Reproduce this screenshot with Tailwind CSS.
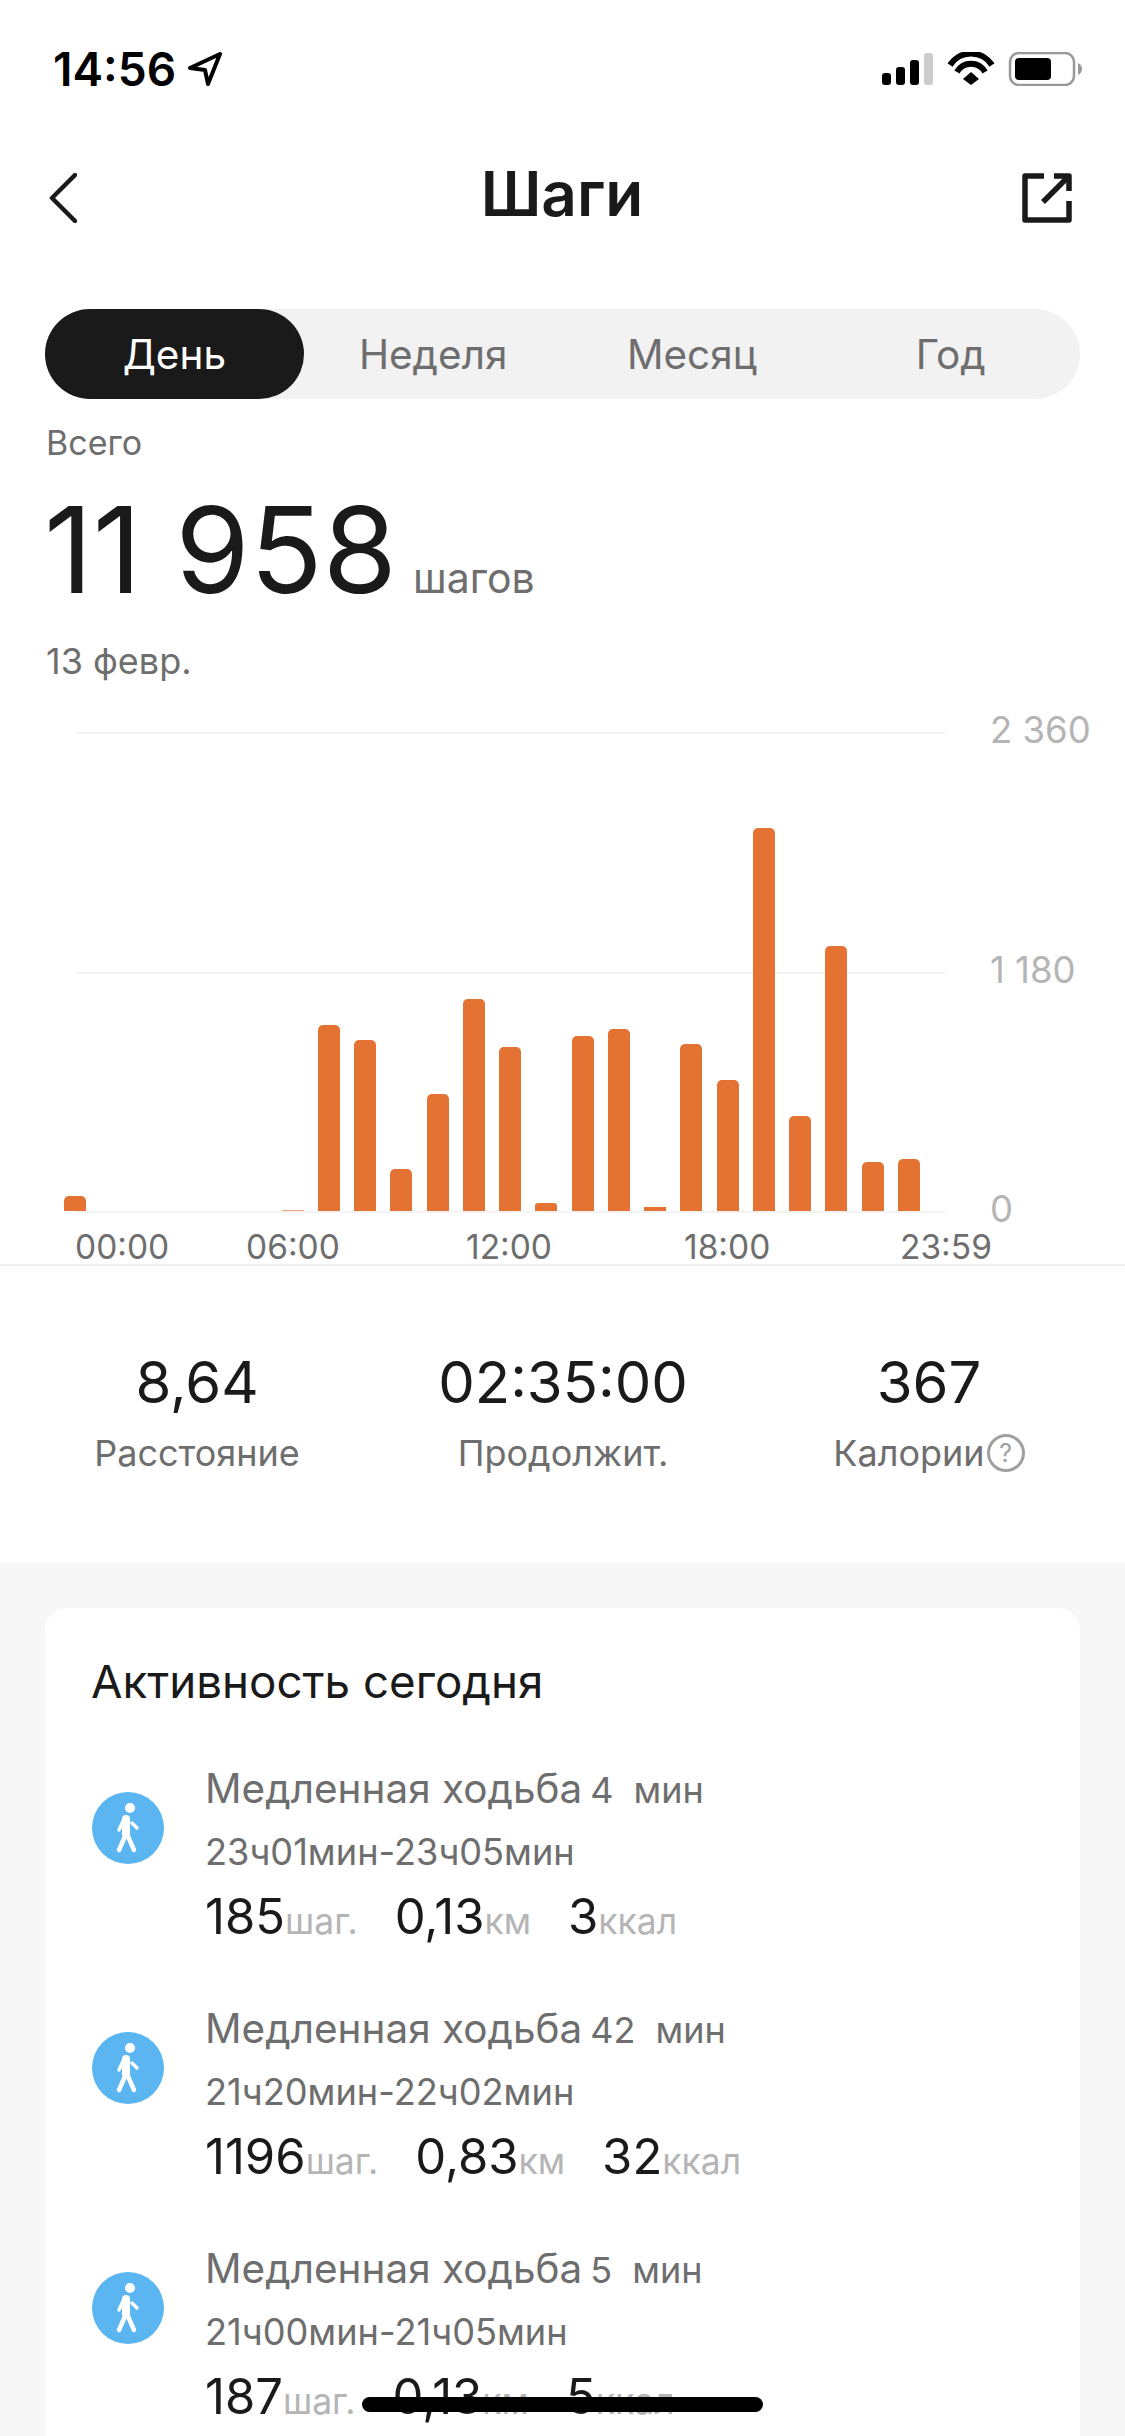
<!DOCTYPE html>
<html lang="ru">

<head>
  <meta charset="UTF-8">
  <meta name="viewport" content="width=device-width, initial-scale=1.0">
  <title>Шаги</title>
  <script src="https://cdn.jsdelivr.net/npm/@tailwindcss/browser@4"></script>
</head>

<body class="bg-white font-['Inter',sans-serif] text-[#1a1a1a]">
  <div class="relative h-[2436px] w-[1125px] overflow-hidden">

    <!-- Status bar -->
    <div class="flex h-[140px] justify-between pl-[53px] pr-[43px] pt-[52px]">
      <div class="flex h-[34px] items-center gap-[12px]">
        <span class="text-[46px] font-semibold leading-[34px] text-black">14:56</span>
        <svg width="34" height="34" viewBox="0 0 34 34" fill="none" stroke="#000" stroke-width="4" stroke-linejoin="round">
          <path d="M32 2 L2 16 L17 18 L20 32 Z" />
        </svg>
      </div>
      <svg width="200" height="34" viewBox="0 0 200 34">
        <rect x="0" y="21" width="9" height="12" rx="3" fill="#000" />
        <rect x="14" y="15" width="9" height="18" rx="3" fill="#000" />
        <rect x="28" y="8" width="9" height="25" rx="3" fill="#000" />
        <rect x="42" y="1" width="9" height="32" rx="3" fill="#ccc" />
        <path d="M68 13 A 25 25 0 0 1 110 13" fill="none" stroke="#000" stroke-width="6" />
        <path d="M75 20 A 16 16 0 0 1 103 20" fill="none" stroke="#000" stroke-width="6" />
        <path d="M81 27 L89 20 Q89 20 97 27 L89 33 Z" fill="#000" />
        <rect x="128" y="1" width="64" height="32" rx="9" fill="none" stroke="#999" stroke-width="2.5" />
        <rect x="133" y="6" width="36" height="22" rx="4" fill="#000" />
        <path d="M196 11 Q200 13 200 17 Q200 21 196 23 Z" fill="#999" />
      </svg>
    </div>

    <!-- Header -->
    <div class="grid h-[116px] grid-cols-[1fr_auto_1fr] items-center pl-[49px] pr-[53px]">
      <svg width="28" height="50" viewBox="0 0 28 50" fill="none" stroke="#1a1a1a" stroke-width="4.5" stroke-linecap="round" stroke-linejoin="round">
        <path d="M26 2 L3 25 L26 48" />
      </svg>
      <h1 class="mb-[8px] ml-[3px] text-[62px] font-semibold leading-none">Шаги</h1>
      <svg class="justify-self-end" width="50" height="50" viewBox="0 0 50 50" fill="none" stroke="#1a1a1a" stroke-width="5.5" stroke-linejoin="round">
        <path d="M22 3 H3 V47 H47 V28" />
        <path d="M21 29 L45 5" />
        <path d="M32 3 H47 V18" />
      </svg>
    </div>

    <!-- Period tabs -->
    <div class="mx-[45px] mt-[53px] grid h-[90px] grid-cols-4 rounded-full bg-[#f2f2f2] text-center text-[40.5px] leading-[92px] text-[#6e6e6e]">
      <div class="h-[90px] rounded-full bg-[#1a1a1a] text-white">День</div>
      <div class="h-[90px]">Неделя</div>
      <div class="h-[90px]">Месяц</div>
      <div class="h-[90px]">Год</div>
    </div>

    <!-- Total -->
    <div class="px-[46px]">
      <div class="mt-[24px] text-[34px] leading-[40px] text-[#6e6e6e]">Всего</div>
      <div class="mt-[25px] flex h-[119px] items-baseline gap-[16px]">
        <span class="-ml-[2px] text-[120px] leading-[124px]">11 958</span>
        <span class="text-[41px] text-[#6e6e6e]">шагов</span>
      </div>
      <div class="mt-[32px] text-[36px] leading-[44px] text-[#6e6e6e]">13 февр.</div>
    </div>

    <!-- Chart -->
    <div class="relative mt-[49px] h-[532px]">
      <div class="ml-[76px] flex h-[240px] w-[869px] border-t-2 border-[#f3f3f3]">
        <span class="ml-[914px] -mt-[22px] whitespace-nowrap text-[36.5px] leading-[36px] text-[#b5b5b5]">2 360</span>
      </div>
      <div class="ml-[76px] flex h-[239px] w-[869px] border-t-2 border-[#f3f3f3]">
        <span class="ml-[914px] -mt-[22px] whitespace-nowrap text-[36.5px] leading-[36px] text-[#b5b5b5]">1 180</span>
      </div>
      <div class="ml-[76px] flex h-[21px] w-[869px] border-t-2 border-[#f3f3f3]">
        <span class="ml-[914px] -mt-[22px] whitespace-nowrap text-[36.5px] leading-[36px] text-[#b5b5b5]">0</span>
      </div>

      <!-- Bars sit on top of the grid lines -->
      <div class="absolute left-[57px] top-[96px] flex h-[383px] w-[870px] items-end">
        <div class="flex flex-1 justify-center"><div class="h-[15px] w-[22px] rounded-t-[5px] bg-[#e47232]"></div></div>
        <div class="flex-1"></div>
        <div class="flex-1"></div>
        <div class="flex-1"></div>
        <div class="flex-1"></div>
        <div class="flex-1"></div>
        <div class="flex flex-1 justify-center"><div class="h-[1px] w-[22px] bg-[#eda67c]"></div></div>
        <div class="flex flex-1 justify-center"><div class="h-[186px] w-[22px] rounded-t-[5px] bg-[#e47232]"></div></div>
        <div class="flex flex-1 justify-center"><div class="h-[171px] w-[22px] rounded-t-[5px] bg-[#e47232]"></div></div>
        <div class="flex flex-1 justify-center"><div class="h-[42px] w-[22px] rounded-t-[5px] bg-[#e47232]"></div></div>
        <div class="flex flex-1 justify-center"><div class="h-[117px] w-[22px] rounded-t-[5px] bg-[#e47232]"></div></div>
        <div class="flex flex-1 justify-center"><div class="h-[212px] w-[22px] rounded-t-[5px] bg-[#e47232]"></div></div>
        <div class="flex flex-1 justify-center"><div class="h-[164px] w-[22px] rounded-t-[5px] bg-[#e47232]"></div></div>
        <div class="flex flex-1 justify-center"><div class="h-[8px] w-[22px] rounded-t-[3px] bg-[#e47232]"></div></div>
        <div class="flex flex-1 justify-center"><div class="h-[175px] w-[22px] rounded-t-[5px] bg-[#e47232]"></div></div>
        <div class="flex flex-1 justify-center"><div class="h-[182px] w-[22px] rounded-t-[5px] bg-[#e47232]"></div></div>
        <div class="flex flex-1 justify-center"><div class="h-[4px] w-[22px] bg-[#e47232]"></div></div>
        <div class="flex flex-1 justify-center"><div class="h-[167px] w-[22px] rounded-t-[5px] bg-[#e47232]"></div></div>
        <div class="flex flex-1 justify-center"><div class="h-[131px] w-[22px] rounded-t-[5px] bg-[#e47232]"></div></div>
        <div class="flex flex-1 justify-center"><div class="h-[383px] w-[22px] rounded-t-[5px] bg-[#e47232]"></div></div>
        <div class="flex flex-1 justify-center"><div class="h-[95px] w-[22px] rounded-t-[5px] bg-[#e47232]"></div></div>
        <div class="flex flex-1 justify-center"><div class="h-[265px] w-[22px] rounded-t-[5px] bg-[#e47232]"></div></div>
        <div class="flex flex-1 justify-center"><div class="h-[49px] w-[22px] rounded-t-[5px] bg-[#e47232]"></div></div>
        <div class="flex flex-1 justify-center"><div class="h-[52px] w-[22px] rounded-t-[5px] bg-[#e47232]"></div></div>
      </div>

      <!-- Time axis -->
      <div class="flex h-[32px] pl-[75px] text-[33.5px] leading-[30px] text-[#6e6e6e]">
        <span class="w-[171px]">00:00</span>
        <span class="w-[220px]">06:00</span>
        <span class="w-[218px]">12:00</span>
        <span class="w-[216px]">18:00</span>
        <span>23:59</span>
      </div>
    </div>

    <!-- Summary -->
    <div class="grid h-[299px] grid-cols-[366px_366px_366px] border-t-2 border-[#efefef] pl-[14px] pt-[84px] text-center">
      <div>
        <div class="text-[58px] leading-[64px]">8,64</div>
        <div class="mt-[17px] text-[36px] leading-[44px] text-[#6e6e6e]">Расстояние</div>
      </div>
      <div>
        <div class="text-[58px] leading-[64px]">02:35:00</div>
        <div class="mt-[17px] text-[36px] leading-[44px] text-[#6e6e6e]">Продолжит.</div>
      </div>
      <div>
        <div class="text-[58px] leading-[64px]">367</div>
        <div class="mt-[17px] flex items-center justify-center gap-[2px] text-[36px] leading-[44px] text-[#6e6e6e]">
          Калории
          <span class="flex h-[38px] w-[38px] items-center justify-center rounded-full border-[3px] border-[#a0a0a0] text-[25px] leading-none text-[#a0a0a0]">?</span>
        </div>
      </div>
    </div>

    <!-- Activity list -->
    <div class="h-[900px] bg-[#f7f7f7] px-[45px] pt-[45px]">
      <div class="h-[900px] rounded-[22px] bg-white px-[47px] pt-[47px]">
        <h2 class="-ml-[1px] text-[45.7px] leading-[54px]">Активность сегодня</h2>

        <div class="mt-[54px] flex h-[240px] gap-[41px]">
          <div class="mt-[29px] flex h-[72px] w-[72px] shrink-0 items-center justify-center rounded-full bg-[#5ab5f0]">
            <svg width="72" height="72" viewBox="0 0 72 72" fill="none" stroke="#fff" stroke-linecap="round" stroke-linejoin="round">
              <circle cx="38" cy="16" r="5" fill="#fff" stroke="none" />
              <path d="M34 27 L34 42" stroke-width="8" />
              <path d="M34 42 L27 58 M35 42 L42 58" stroke-width="4.5" />
              <path d="M32 27 L27 38 M40 31 L45 36" stroke-width="3.5" />
            </svg>
          </div>
          <div>
            <div class="flex items-baseline text-[#6e6e6e]">
              <span class="text-[40.5px] leading-[50px]">Медленная ходьба</span>
              <span class="ml-[8px] text-[36px]">4</span>
              <span class="ml-[20px] text-[36px]">мин</span>
            </div>
            <div class="mt-[10px] text-[36.2px] leading-[50px] text-[#6e6e6e]">23ч01мин-23ч05мин</div>
            <div class="mt-[12px] flex items-baseline leading-[56px]">
              <span class="text-[49px]">185</span><span class="mr-[37px] text-[35.5px] text-[#b5b5b5]">шаг.</span>
              <span class="text-[49px]">0,13</span><span class="mr-[37px] text-[35.5px] text-[#b5b5b5]">км</span>
              <span class="text-[49px]">3</span><span class="text-[35.5px] text-[#b5b5b5]">ккал</span>
            </div>
          </div>
        </div>

        <div class="flex h-[240px] gap-[41px]">
          <div class="mt-[29px] flex h-[72px] w-[72px] shrink-0 items-center justify-center rounded-full bg-[#5ab5f0]">
            <svg width="72" height="72" viewBox="0 0 72 72" fill="none" stroke="#fff" stroke-linecap="round" stroke-linejoin="round">
              <circle cx="38" cy="16" r="5" fill="#fff" stroke="none" />
              <path d="M34 27 L34 42" stroke-width="8" />
              <path d="M34 42 L27 58 M35 42 L42 58" stroke-width="4.5" />
              <path d="M32 27 L27 38 M40 31 L45 36" stroke-width="3.5" />
            </svg>
          </div>
          <div>
            <div class="flex items-baseline text-[#6e6e6e]">
              <span class="text-[40.5px] leading-[50px]">Медленная ходьба</span>
              <span class="ml-[8px] text-[36px]">42</span>
              <span class="ml-[20px] text-[36px]">мин</span>
            </div>
            <div class="mt-[10px] text-[36.2px] leading-[50px] text-[#6e6e6e]">21ч20мин-22ч02мин</div>
            <div class="mt-[12px] flex items-baseline leading-[56px]">
              <span class="text-[49px]">1196</span><span class="mr-[37px] text-[35.5px] text-[#b5b5b5]">шаг.</span>
              <span class="text-[49px]">0,83</span><span class="mr-[37px] text-[35.5px] text-[#b5b5b5]">км</span>
              <span class="text-[49px]">32</span><span class="text-[35.5px] text-[#b5b5b5]">ккал</span>
            </div>
          </div>
        </div>

        <div class="flex h-[240px] gap-[41px]">
          <div class="mt-[29px] flex h-[72px] w-[72px] shrink-0 items-center justify-center rounded-full bg-[#5ab5f0]">
            <svg width="72" height="72" viewBox="0 0 72 72" fill="none" stroke="#fff" stroke-linecap="round" stroke-linejoin="round">
              <circle cx="38" cy="16" r="5" fill="#fff" stroke="none" />
              <path d="M34 27 L34 42" stroke-width="8" />
              <path d="M34 42 L27 58 M35 42 L42 58" stroke-width="4.5" />
              <path d="M32 27 L27 38 M40 31 L45 36" stroke-width="3.5" />
            </svg>
          </div>
          <div>
            <div class="flex items-baseline text-[#6e6e6e]">
              <span class="text-[40.5px] leading-[50px]">Медленная ходьба</span>
              <span class="ml-[8px] text-[36px]">5</span>
              <span class="ml-[20px] text-[36px]">мин</span>
            </div>
            <div class="mt-[10px] text-[36.2px] leading-[50px] text-[#6e6e6e]">21ч00мин-21ч05мин</div>
            <div class="mt-[12px] flex items-baseline leading-[56px]">
              <span class="text-[49px]">187</span><span class="mr-[37px] text-[35.5px] text-[#b5b5b5]">шаг.</span>
              <span class="text-[49px]">0,13</span><span class="mr-[37px] text-[35.5px] text-[#b5b5b5]">км</span>
              <span class="text-[49px]">5</span><span class="text-[35.5px] text-[#b5b5b5]">ккал</span>
            </div>
          </div>
        </div>
      </div>
    </div>

    <!-- Home indicator -->
    <div class="absolute left-[362px] top-[2397px] h-[15px] w-[401px] rounded-full bg-black"></div>
  </div>
</body>

</html>
